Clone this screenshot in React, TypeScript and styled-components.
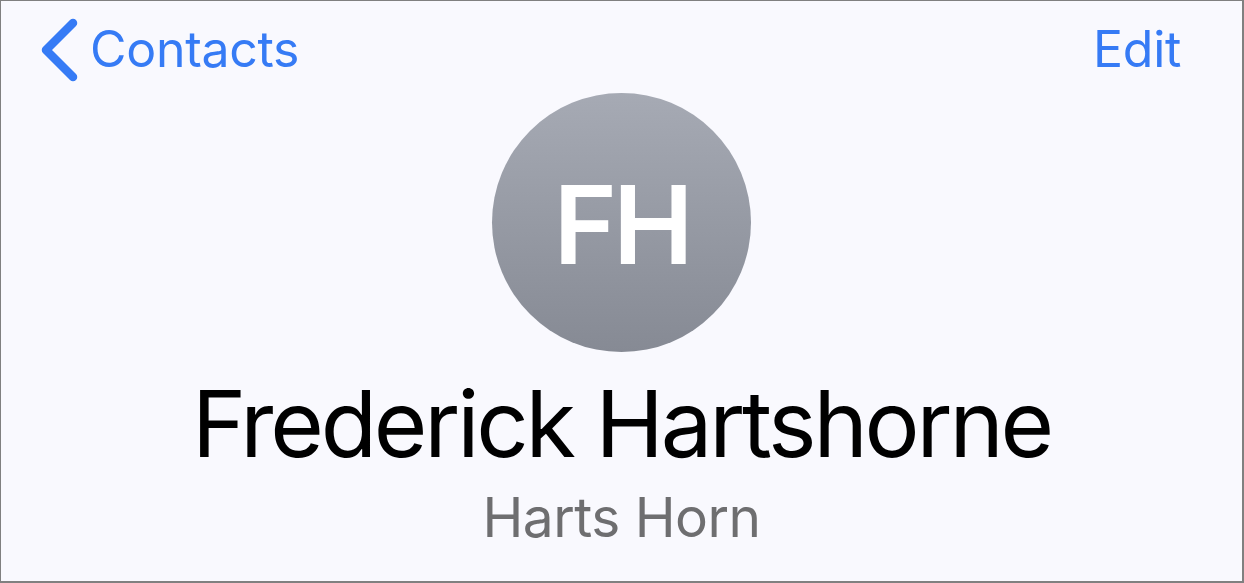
import styled, { createGlobalStyle } from 'styled-components'

const GlobalStyle = createGlobalStyle`
  html, body {
    margin: 0;
    padding: 0;
  }
  body {
    font-family: Inter, 'Liberation Sans', sans-serif;
    background: #f9f9fe;
  }
`

const Screen = styled.div`
  box-sizing: border-box;
  width: 1244px;
  height: 583px;
  background: #f9f9fe;
  border-style: solid;
  border-color: #808080;
  border-width: 1px 2px 2px 1px;
  display: flex;
  flex-direction: column;
  align-items: center;
  overflow: hidden;
`

const NavBar = styled.div`
  align-self: stretch;
  display: flex;
  justify-content: space-between;
  align-items: center;
  padding: 15px 61px 0 39px;
`

const NavButton = styled.div`
  display: flex;
  align-items: center;
  gap: 10px;
  font-size: 50px;
  line-height: 60px;
  color: #367bf5;
  letter-spacing: -0.3px;
`

const Avatar = styled.div`
  margin-top: 11px;
  width: 259px;
  height: 259px;
  border-radius: 50%;
  background: linear-gradient(180deg, #a6aab4 0%, #868a94 100%);
  display: flex;
  align-items: center;
  justify-content: center;
  color: #ffffff;
  font-size: 108px;
  font-weight: 600;
  letter-spacing: -4px;
  line-height: 1;
  padding-top: 4px;
  box-sizing: border-box;
`

const Name = styled.div`
  margin-top: 21px;
  font-size: 92px;
  line-height: 101px;
  color: #000000;
  letter-spacing: -3.2px;
`

const Subtitle = styled.div`
  margin-top: 10px;
  font-size: 55px;
  line-height: 66px;
  color: #6e6e70;
  letter-spacing: -0.5px;
`

function BackChevron() {
  return (
    <svg width="40" height="66" viewBox="0 0 40 66" fill="none">
      <path
        d="M33 7 L6 34 L33 61"
        stroke="#367bf5"
        strokeWidth="8.5"
        strokeLinecap="round"
        strokeLinejoin="round"
      />
    </svg>
  )
}

function App() {
  return (
    <>
      <GlobalStyle />
      <Screen>
        <NavBar>
          <NavButton>
            <BackChevron />
            <span>Contacts</span>
          </NavButton>
          <NavButton>Edit</NavButton>
        </NavBar>
        <Avatar>FH</Avatar>
        <Name>Frederick Hartshorne</Name>
        <Subtitle>Harts Horn</Subtitle>
      </Screen>
    </>
  )
}

export default App
